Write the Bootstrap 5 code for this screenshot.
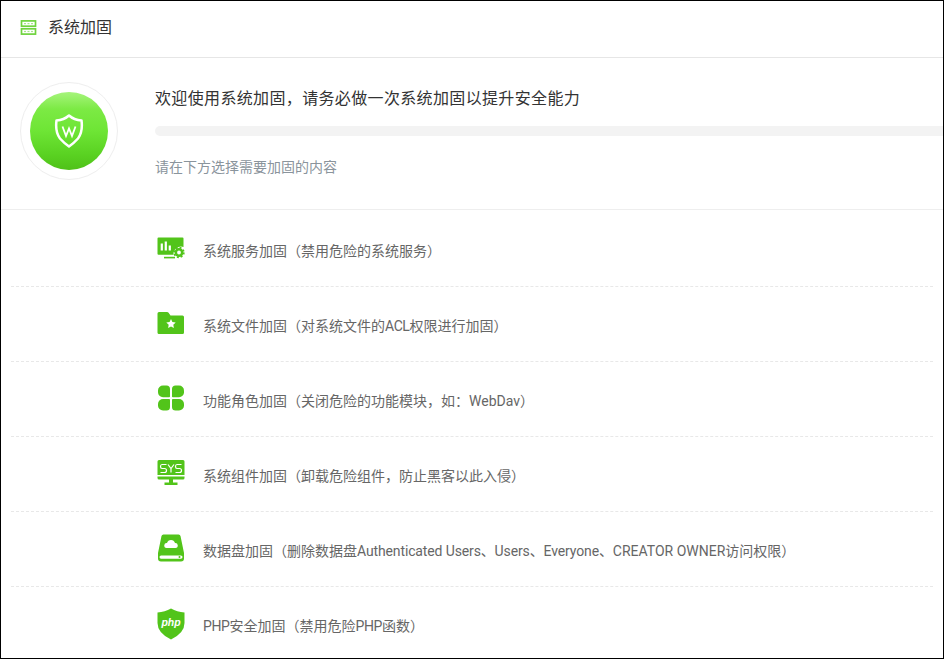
<!DOCTYPE html>
<html lang="zh-CN">
<head>
<meta charset="utf-8">
<title>系统加固</title>
<link href="https://cdn.jsdelivr.net/npm/bootstrap@5.3.0/dist/css/bootstrap.min.css" rel="stylesheet">
<style>
html,body{height:100%;overflow:hidden;background:#fff}
body{font-family:Roboto,"Noto Sans CJK SC",sans-serif;color:#333}
.frame{height:659px;border:1px solid #000;overflow:hidden}
.head-bar{height:57px;border-bottom:1px solid #e6e6e6;padding:0 0 3px 19px;gap:11px}
.head-bar h1{font-size:16px;font-weight:400;color:#333;margin:0;line-height:1}
.hero{height:152px;border-bottom:1px solid #eeeeee;padding-left:19px}
.ring{width:98px;height:98px;border-radius:50%;border:1px solid #eeeeee;flex:none;margin-top:24px}
.orb{width:78px;height:78px;border-radius:50%;background:radial-gradient(circle at 50% 50%,rgba(255,255,255,0) 90%,rgba(255,255,255,.18) 100%),linear-gradient(180deg,#a6f47c 0,#7cea44 22%,#6ee535 50%,#5ad222 80%,#4fc118 100%)}
.hero-body{margin-left:37px;flex:1;min-width:0;padding-top:32px}
.hero-title{font-size:16px;letter-spacing:.35px;line-height:18px;color:#333;margin:0}
.meter{height:10px;background:#f3f3f3;border-radius:5px 0 0 5px;margin-top:18px;margin-right:-1px}
.hero-note{font-size:14px;line-height:18px;color:#8a949c;margin:22px 0 0}
.item-list{padding:2px 10px 0}
.item-row{height:75px;border-bottom:1px dashed #e8e8e8;padding-left:146px;gap:18px;padding-top:1px}
.item-row:last-child{border-bottom:0}
.item-row svg{flex:none;display:block;margin-bottom:3px}
.item-text{font-size:14px;color:#666;white-space:nowrap;line-height:18px;padding-top:2px}
.cap-run{letter-spacing:-.4px}
.word-run{letter-spacing:-.13px}
</style>
</head>
<body>
<div class="frame">
  <div class="head-bar d-flex align-items-center">
    <svg width="17" height="15" viewBox="0 0 17 15" aria-hidden="true"><g fill="none" stroke="#6fd33e" stroke-width="1.700"><rect x="1.500" y=".9" width="14" height="5.300"/><rect x="1.500" y="8.800" width="14" height="5.300"/></g><g fill="#a9e58d"><rect x="4" y="3" width="2" height="1.200"/><rect x="7.500" y="3" width="2" height="1.200"/><rect x="11" y="3" width="2" height="1.200"/><rect x="4" y="10.900" width="2" height="1.200"/><rect x="7.500" y="10.900" width="2" height="1.200"/><rect x="11" y="10.900" width="2" height="1.200"/></g></svg>
    <h1>系统加固</h1>
  </div>
  <div class="hero d-flex align-items-start">
    <div class="ring d-flex align-items-center justify-content-center">
      <div class="orb d-flex align-items-center justify-content-center">
        <svg width="30" height="36" viewBox="0 0 30 36" aria-hidden="true"><path d="M15 2.500 Q20 7 27.500 7.500 Q29 19 24 25.500 Q20 30 15 33.500 Q10 30 6 25.500 Q1 19 2.500 7.500 Q10 7 15 2.500 Z" fill="none" stroke="#fff" stroke-width="2.500" stroke-linejoin="round"/><path d="M8.500 13.500 L12 23 L15 15.500 L18 23 L21.500 13.500" fill="none" stroke="#fff" stroke-width="1.800"/></svg>
      </div>
    </div>
    <div class="hero-body">
      <p class="hero-title">欢迎使用系统加固，请务必做一次系统加固以提升安全能力</p>
      <div class="meter"></div>
      <p class="hero-note">请在下方选择需要加固的内容</p>
    </div>
  </div>
  <div class="item-list">
    <div class="item-row d-flex align-items-center">
      <svg width="28" height="28" viewBox="0 0 28 28" aria-hidden="true"><path d="M1.500 3.500h24a1 1 0 0 1 1 1v8.500a7.500 7.500 0 0 0-10 7.800H1.500a1 1 0 0 1-1-1V4.500a1 1 0 0 1 1-1z" fill="#52c41a"/><g fill="#fff"><rect x="3.700" y="9.500" width="2.200" height="7"/><rect x="7.700" y="7.500" width="2.200" height="9"/><rect x="11.700" y="11.500" width="2.200" height="5"/></g><rect x="7" y="22.800" width="11" height="1.600" fill="#52c41a"/><circle cx="22" cy="18.500" r="3.200" fill="none" stroke="#52c41a" stroke-width="2.600"/><circle cx="22" cy="18.500" r="4.900" fill="none" stroke="#52c41a" stroke-width="1.600" stroke-dasharray="1.900 1.950"/></svg>
      <span class="item-text">系统服务加固（禁用危险的系统服务）</span>
    </div>
    <div class="item-row d-flex align-items-center">
      <svg width="28" height="28" viewBox="0 0 28 28" aria-hidden="true"><path d="M2 3h8a2 2 0 0 1 1.600.8L13.500 6.500H25.500A1.500 1.500 0 0 1 27 8v15.500A1.500 1.500 0 0 1 25.500 25h-23A1.500 1.500 0 0 1 .5 23.500V4.500A1.500 1.500 0 0 1 2 3z" fill="#52c41a"/><path d="M14 10l1.400 3 3.300.4-2.400 2.300.6 3.300-2.900-1.600-2.900 1.600.6-3.300-2.400-2.300 3.300-.4z" fill="#fff"/></svg>
      <span class="item-text">系统文件加固（对系统文件的<span class="cap-run">ACL</span>权限进行加固）</span>
    </div>
    <div class="item-row d-flex align-items-center">
      <svg width="28" height="28" viewBox="0 0 28 28" aria-hidden="true"><g fill="#52c41a"><path d="M6 1.500h3.500A3.500 3.500 0 0 1 13 5v7.500a.8.8 0 0 1-.8.8H6a5 5 0 0 1-5-5V6.500a5 5 0 0 1 5-5z"/><path d="M18.500 1.500H22a5 5 0 0 1 5 5v1.800a5 5 0 0 1-5 5h-6.200a.8.8 0 0 1-.8-.8V5a3.500 3.500 0 0 1 3.500-3.500z"/><path d="M6 15h6.200a.8.8 0 0 1 .8.800V23a3.500 3.500 0 0 1-3.500 3.500H6a5 5 0 0 1-5-5V20a5 5 0 0 1 5-5z"/><path d="M15.800 15H22a5 5 0 0 1 5 5v1.500a5 5 0 0 1-5 5h-3.500A3.500 3.500 0 0 1 15 23v-7.200a.8.8 0 0 1 .8-.8z"/></g></svg>
      <span class="item-text">功能角色加固（关闭危险的功能模块，如：WebDav）</span>
    </div>
    <div class="item-row d-flex align-items-center">
      <svg width="28" height="28" viewBox="0 0 28 28" aria-hidden="true"><path d="M2 1h24A1.500 1.500 0 0 1 27.500 2.500V16H.5V2.500A1.500 1.500 0 0 1 2 1z" fill="#52c41a"/><path d="M.5 17.500h27v1.500a1.500 1.500 0 0 1-1.500 1.500H2A1.500 1.500 0 0 1 .5 19z" fill="#52c41a"/><path d="M12 20h4v3.500h4.500v2.500h-13v-2.500H12z" fill="#52c41a"/><g fill="none" stroke="#fff" stroke-width="1.200"><path d="M9.500 5.500H5Q3.500 5.500 3.500 7.500T5 9.500H7.500Q9.500 9.500 9.500 11.500T7.500 13.500H3.500"/><path d="M11 5.500L14 9.500L17 5.500M14 9.500V13.500"/><path d="M24.500 5.500H20Q18.500 5.500 18.500 7.500T20 9.500H22.500Q24.500 9.500 24.500 11.500T22.500 13.500H18.500"/></g></svg>
      <span class="item-text">系统组件加固（卸载危险组件，防止黑客以此入侵）</span>
    </div>
    <div class="item-row d-flex align-items-center">
      <svg width="28" height="28" viewBox="0 0 28 28" aria-hidden="true"><path d="M6.500 .5h15a2 2 0 0 1 2 1.500L27 19v5.500a3 3 0 0 1-3 3H4a3 3 0 0 1-3-3V19L4.500 2a2 2 0 0 1 2-1.500z" fill="#52c41a"/><path d="M9.500 14a2.500 2.500 0 0 1 .5-5 4.200 4.200 0 0 1 8 0 2.500 2.500 0 0 1 .5 5z" fill="#fff"/><rect x="2.500" y="21.500" width="23" height="3.200" rx="1.600" fill="#fff"/><circle cx="22.500" cy="23.100" r="1" fill="#52c41a"/></svg>
      <span class="item-text">数据盘加固（删除数据盘<span class="word-run">Authenticated Users、Users、Everyone、</span>CREATOR OWNER访问权限）</span>
    </div>
    <div class="item-row d-flex align-items-center">
      <svg width="28" height="32" viewBox="0 0 28 32" aria-hidden="true"><path d="M14 .5Q20 4 27.500 4.500V15Q27.500 25 14 31.500Q.5 25 .5 15V4.500Q8 4 14 .5z" fill="#52c41a"/><text x="14" y="18" text-anchor="middle" font-family="'Liberation Sans',sans-serif" font-size="10.500" font-weight="700" font-style="italic" fill="#fff">php</text></svg>
      <span class="item-text"><span class="cap-run">PHP</span>安全加固（禁用危险<span class="cap-run">PHP</span>函数）</span>
    </div>
  </div>
</div>
</body>
</html>
